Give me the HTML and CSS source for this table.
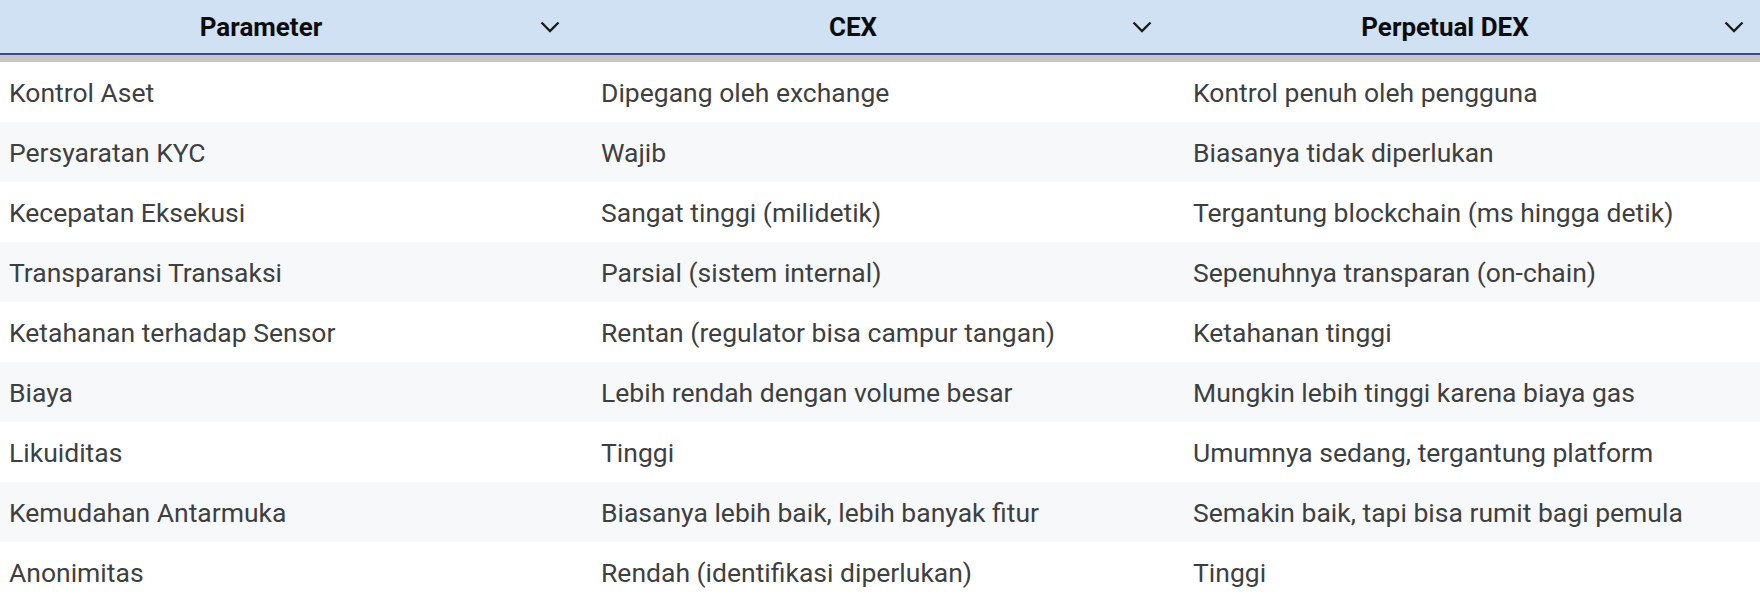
FILE: index.html
```html
<!DOCTYPE html>
<html lang="id">
<head>
<meta charset="utf-8">
<title>CEX vs Perpetual DEX</title>
<link rel="stylesheet" href="styles.css">
</head>
<body>
<div class="wrap">
<table class="cmp">
  <thead>
    <tr>
      <th><div class="th-in"><span class="th-label">Parameter</span><svg class="chev" viewBox="0 0 20 12"><polyline points="1.5,1.5 10,10 18.5,1.5"/></svg></div></th>
      <th><div class="th-in"><span class="th-label">CEX</span><svg class="chev" viewBox="0 0 20 12"><polyline points="1.5,1.5 10,10 18.5,1.5"/></svg></div></th>
      <th><div class="th-in"><span class="th-label">Perpetual DEX</span><svg class="chev" viewBox="0 0 20 12"><polyline points="1.5,1.5 10,10 18.5,1.5"/></svg></div></th>
    </tr>
    <tr class="band"><td colspan="3"></td></tr>
  </thead>
  <tbody>
    <tr><td>Kontrol Aset</td><td>Dipegang oleh exchange</td><td>Kontrol penuh oleh pengguna</td></tr>
    <tr><td>Persyaratan KYC</td><td>Wajib</td><td>Biasanya tidak diperlukan</td></tr>
    <tr><td>Kecepatan Eksekusi</td><td>Sangat tinggi (milidetik)</td><td>Tergantung blockchain (ms hingga detik)</td></tr>
    <tr><td>Transparansi Transaksi</td><td>Parsial (sistem internal)</td><td>Sepenuhnya transparan (on-chain)</td></tr>
    <tr><td>Ketahanan terhadap Sensor</td><td>Rentan (regulator bisa campur tangan)</td><td>Ketahanan tinggi</td></tr>
    <tr><td>Biaya</td><td>Lebih rendah dengan volume besar</td><td>Mungkin lebih tinggi karena biaya gas</td></tr>
    <tr><td>Likuiditas</td><td>Tinggi</td><td>Umumnya sedang, tergantung platform</td></tr>
    <tr><td>Kemudahan Antarmuka</td><td>Biasanya lebih baik, lebih banyak fitur</td><td>Semakin baik, tapi bisa rumit bagi pemula</td></tr>
    <tr><td>Anonimitas</td><td>Rendah (identifikasi diperlukan)</td><td>Tinggi</td></tr>
  </tbody>
</table>
</div>
</body>
</html>
```
FILE: styles.css
```css
html, body {
  margin: 0;
  padding: 0;
  background: #ffffff;
  overflow: hidden;
}
.wrap {
  width: 1776px;
}
.cmp {
  width: 1776px;
  table-layout: fixed;
  border-collapse: separate;
  border-spacing: 0;
  font-family: Roboto, "Liberation Sans", sans-serif;
}
.cmp th {
  width: 592px;
  height: 53px;
  padding: 0;
  background: #cfe1f3;
  border-bottom: 2px solid #3d4a86;
}
.cmp .band td {
  height: 7px;
  padding: 0;
  background: #c5c6c8;
}
.th-in {
  display: flex;
  align-items: center;
  height: 53px;
  padding-right: 32px;
}
.th-label {
  flex: 1;
  text-align: center;
  font-size: 26px;
  font-weight: 700;
  color: #0c0c0c;
}
.chev {
  width: 20px;
  height: 12px;
  margin-left: 18px;
  fill: none;
  stroke: #1a1a1a;
  stroke-width: 2.3;
}
.cmp tbody td {
  height: 60px;
  padding: 0 0 0 9px;
  font-size: 26.5px;
  color: #3e3f41;
  white-space: nowrap;
  box-sizing: border-box;
}
.cmp tbody tr:nth-child(even) td {
  background: #f7f8f9;
}
```
